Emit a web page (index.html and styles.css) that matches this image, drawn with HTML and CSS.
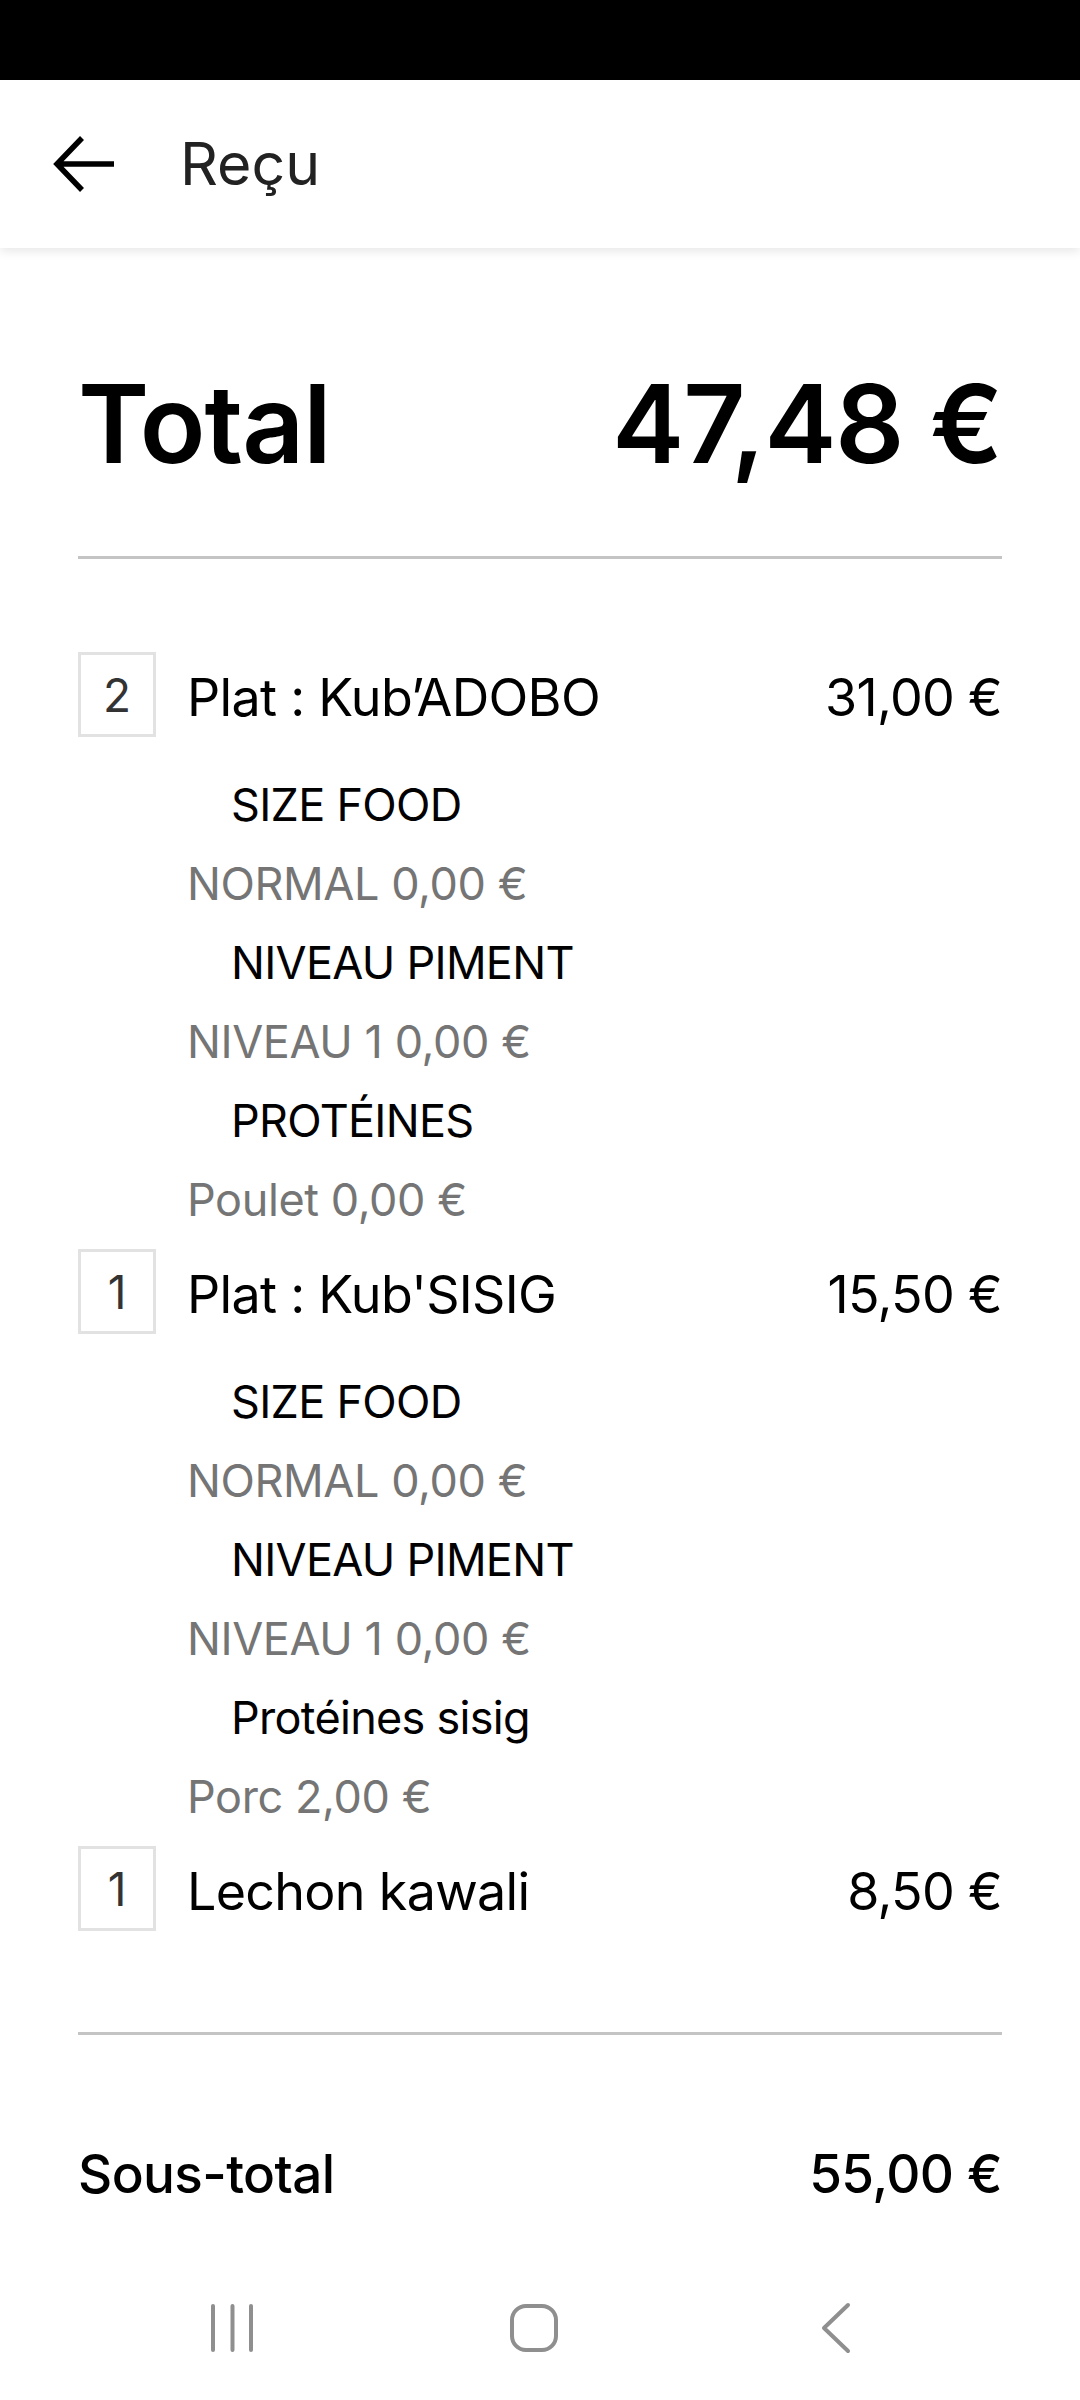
FILE: index.html
```html
<!DOCTYPE html>
<html lang="fr">
<head>
<meta charset="utf-8">
<title>Reçu</title>
<link rel="stylesheet" href="styles.css">
</head>
<body>
<div class="screen">
  <div class="status"></div>
  <header class="appbar">
    <svg class="back" width="62" height="56" viewBox="0 0 62 56" aria-hidden="true">
      <path d="M61 28 H5 M29 2 L4 28 L29 54" fill="none" stroke="#000" stroke-width="5.5"/>
    </svg>
    <h1 class="title">Reçu</h1>
  </header>
  <main class="content">
    <div class="total-row">
      <span>Total</span>
      <span>47,48 €</span>
    </div>
    <hr class="divider">
    <ul class="items">
      <li class="item">
        <div class="qty">2</div>
        <div class="name">Plat : Kub’ADOBO</div>
        <div class="price">31,00 €</div>
        <ul class="options">
          <li class="opt-head">SIZE FOOD</li>
          <li class="opt-val">NORMAL 0,00 €</li>
          <li class="opt-head">NIVEAU PIMENT</li>
          <li class="opt-val">NIVEAU 1 0,00 €</li>
          <li class="opt-head">PROTÉINES</li>
          <li class="opt-val">Poulet 0,00 €</li>
        </ul>
      </li>
      <li class="item">
        <div class="qty">1</div>
        <div class="name">Plat : Kub'SISIG</div>
        <div class="price">15,50 €</div>
        <ul class="options">
          <li class="opt-head">SIZE FOOD</li>
          <li class="opt-val">NORMAL 0,00 €</li>
          <li class="opt-head">NIVEAU PIMENT</li>
          <li class="opt-val">NIVEAU 1 0,00 €</li>
          <li class="opt-head">Protéines sisig</li>
          <li class="opt-val">Porc 2,00 €</li>
        </ul>
      </li>
      <li class="item">
        <div class="qty">1</div>
        <div class="name">Lechon kawali</div>
        <div class="price">8,50 €</div>
      </li>
    </ul>
    <hr class="divider divider-bottom">
    <div class="subtotal-row">
      <span>Sous-total</span>
      <span>55,00 €</span>
    </div>
  </main>
  <nav class="navbar">
    <div class="nav-btn">
      <svg width="44" height="50" viewBox="0 0 44 50" aria-hidden="true">
        <path d="M3 3 V47 M22.5 3 V47 M41 3 V47" stroke="#8f8f8f" stroke-width="4" stroke-linecap="round" fill="none"/>
      </svg>
    </div>
    <div class="nav-btn">
      <svg width="50" height="50" viewBox="0 0 50 50" aria-hidden="true">
        <rect x="3" y="3" width="44" height="44" rx="14" ry="14" fill="none" stroke="#8f8f8f" stroke-width="4"/>
      </svg>
    </div>
    <div class="nav-btn">
      <svg width="30" height="52" viewBox="0 0 30 52" aria-hidden="true">
        <path d="M27 3 L3 26 L27 49" fill="none" stroke="#8f8f8f" stroke-width="4" stroke-linecap="round" stroke-linejoin="round"/>
      </svg>
    </div>
  </nav>
</div>
</body>
</html>
```
FILE: styles.css
```css
* { box-sizing: border-box; }
html, body {
  margin: 0;
  padding: 0;
  background: #fff;
}
body {
  font-family: Inter, "Noto Sans", "Liberation Sans", sans-serif;
  color: #000;
}
.screen {
  width: 1080px;
  height: 2400px;
  display: flex;
  flex-direction: column;
  overflow: hidden;
}
.status {
  height: 80px;
  flex: 0 0 80px;
  background: #000;
}
.appbar {
  position: relative;
  z-index: 2;
  flex: 0 0 168px;
  height: 168px;
  display: flex;
  align-items: center;
  padding-left: 53px;
  background: #fff;
  box-shadow: 0 3px 10px rgba(0, 0, 0, 0.10);
}
.back { display: block; }
.title {
  margin: 0 0 0 65px;
  font-size: 59px;
  font-weight: 400;
  line-height: 70px;
  color: #222;
}
.content {
  flex: 1 1 auto;
  overflow: hidden;
  padding: 0 78px;
}
.total-row {
  margin-top: 111px;
  display: flex;
  justify-content: space-between;
  font-size: 108px;
  font-weight: 600;
  line-height: 130px;
  letter-spacing: -1px;
}
.divider {
  margin: 67px 0 0;
  border: 0;
  height: 3px;
  background: #c4c4c4;
}
.items {
  list-style: none;
  margin: 93px 0 0;
  padding: 0;
}
.item {
  display: grid;
  grid-template-columns: 78px 1fr auto;
  column-gap: 31px;
  align-items: start;
  margin-bottom: 10px;
}
.qty {
  width: 78px;
  height: 85px;
  border: 3px solid #e2e2e2;
  display: flex;
  align-items: center;
  justify-content: center;
  font-size: 46px;
  color: #333;
  line-height: 1;
}
.name, .price {
  margin-top: 15px;
  font-size: 52px;
  line-height: 62px;
  letter-spacing: -0.7px;
}
.price { text-align: right; }
.options {
  grid-column: 2 / 4;
  list-style: none;
  margin: 28px 0 0;
  padding: 0;
}
.options li {
  line-height: 79px;
  height: 79px;
  white-space: nowrap;
}
.opt-head {
  padding-left: 44px;
  font-size: 45px;
  letter-spacing: -0.7px;
  color: #000;
}
.opt-val {
  font-size: 45px;
  letter-spacing: -0.4px;
  color: #757575;
}
.divider-bottom { margin-top: 101px; }
.subtotal-row {
  margin-top: 107px;
  display: flex;
  justify-content: space-between;
  font-size: 53px;
  font-weight: 500;
  line-height: 64px;
  letter-spacing: -0.6px;
}
.navbar {
  flex: 0 0 144px;
  height: 144px;
  background: #fff;
  display: grid;
  grid-template-columns: repeat(3, 302px);
  justify-content: center;
  align-items: center;
  padding-right: 12px;
}
.nav-btn {
  display: flex;
  justify-content: center;
  align-items: center;
}
.nav-btn svg { display: block; }
```
